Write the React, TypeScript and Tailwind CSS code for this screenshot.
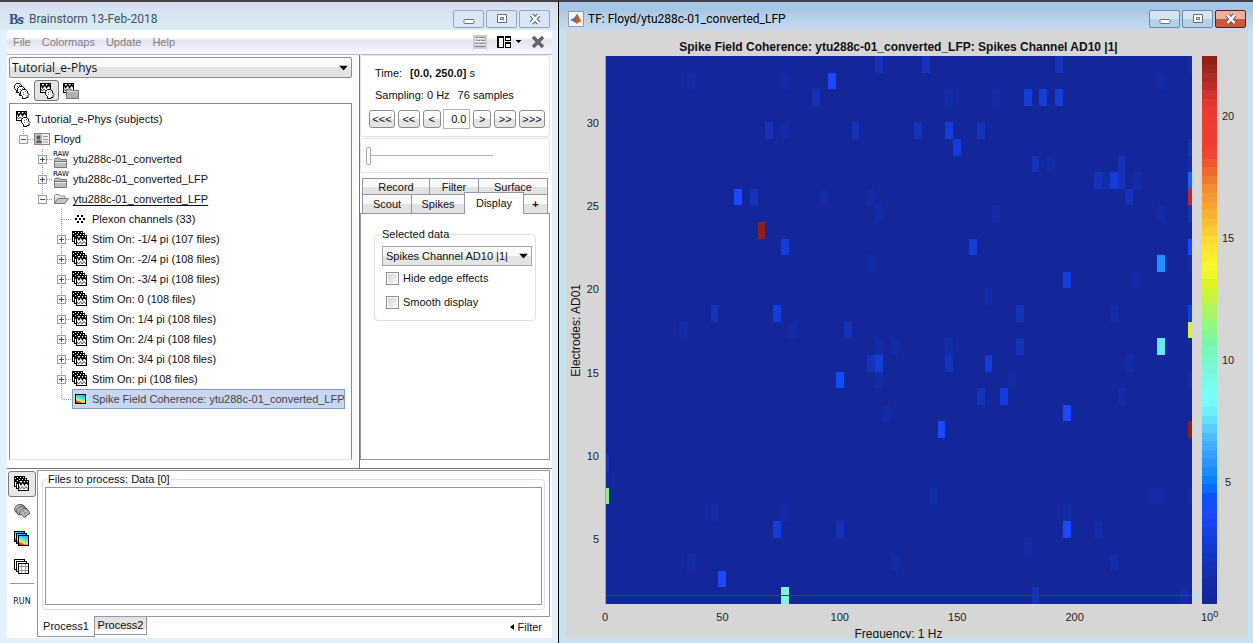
import { useState } from 'react'
import type { ReactNode } from 'react'
import { clsx } from 'clsx'

type Level = 'dim' | 'mid' | 'high' | 'bright'
type Cell = [row: number, col: number, color: string]

const LEVELS: Record<Level, string> = {
  dim: '#142ca8',
  mid: '#1433b8',
  high: '#143cd8',
  bright: '#1c48ff',
}

const ROWS = 33
const COLS = 75

const CELLS: Cell[] = [
  [0, 35, 'mid'], [0, 41, 'mid'], [0, 58, 'mid'], [0, 75, 'dim'],
  [1, 11, 'dim'], [1, 23, 'dim'], [1, 29, 'bright'], [1, 71, 'dim'],
  [2, 27, 'mid'], [2, 44, 'dim'], [2, 50, 'dim'], [2, 54, 'high'], [2, 56, 'high'], [2, 58, 'high'],
  [4, 21, 'mid'], [4, 23, 'dim'], [4, 32, 'mid'], [4, 40, 'mid'], [4, 44, 'high'], [4, 48, 'mid'],
  [5, 45, 'high'], [5, 75, 'mid'],
  [6, 55, 'mid'], [6, 57, 'dim'], [6, 66, 'mid'], [6, 75, 'dim'],
  [7, 63, 'mid'], [7, 64, 'dim'], [7, 65, 'high'], [7, 66, 'mid'], [7, 68, 'dim'], [7, 75, '#1464ff'],
  [8, 17, 'bright'], [8, 19, 'mid'], [8, 28, 'dim'], [8, 34, 'dim'], [8, 67, 'mid'], [8, 75, '#b82c28'],
  [9, 35, 'dim'], [9, 50, 'dim'], [9, 71, 'dim'], [9, 75, 'mid'],
  [10, 20, '#8c201c'],
  [11, 23, 'high'], [11, 47, 'high'], [11, 75, 'bright'],
  [12, 34, 'dim'], [12, 71, '#2090ff'], [12, 75, 'dim'],
  [13, 59, 'high'], [13, 68, 'dim'],
  [14, 49, 'dim'],
  [15, 14, 'mid'], [15, 22, 'high'], [15, 53, 'mid'], [15, 65, 'dim'], [15, 75, 'high'],
  [16, 10, 'dim'], [16, 24, 'dim'], [16, 31, 'mid'], [16, 75, '#d4f428'],
  [17, 35, 'dim'], [17, 37, 'dim'], [17, 44, 'dim'], [17, 53, 'mid'], [17, 71, '#68e8ff'],
  [18, 34, 'mid'], [18, 35, 'high'], [18, 44, 'mid'], [18, 49, 'high'], [18, 67, 'dim'],
  [19, 30, '#0c50ff'], [19, 35, 'dim'], [19, 52, 'dim'], [19, 75, 'dim'],
  [20, 48, 'mid'], [20, 51, 'high'], [20, 66, 'dim'],
  [21, 36, 'dim'], [21, 59, 'bright'],
  [22, 43, 'bright'], [22, 75, '#8c201c'],
  [24, 0, 'mid'],
  [25, 0, 'dim'],
  [26, 0, '#82f68c'], [26, 42, 'dim'], [26, 70, 'dim'], [26, 71, 'dim'], [26, 75, 'dim'],
  [27, 14, 'dim'], [27, 23, 'dim'], [27, 59, 'dim'],
  [28, 22, 'high'], [28, 30, 'mid'], [28, 59, 'bright'], [28, 63, 'dim'],
  [29, 54, 'dim'],
  [30, 11, 'dim'], [30, 37, 'dim'], [30, 65, 'dim'],
  [31, 15, 'bright'],
  [32, 23, '#78f8d8'], [32, 55, 'mid'], [32, 74, 'dim'],
]

const COLOR_STOPS: [number, string][] = [
  [0, '#14279a'], [0.05, '#142eb0'], [0.11, '#143cd8'], [0.16, '#1c48ff'], [0.19, '#0c50ff'],
  [0.22, '#0a80ff'], [0.27, '#38a0ff'], [0.31, '#50c4ff'], [0.34, '#68e8ff'], [0.37, '#78ffff'],
  [0.43, '#78f8d8'], [0.48, '#78f4a8'], [0.51, '#96f680'], [0.555, '#c0f448'], [0.585, '#dcf420'],
  [0.615, '#fcf830'], [0.66, '#ffe030'], [0.706, '#f8b830'], [0.76, '#f09030'], [0.8, '#f06030'],
  [0.83, '#f04030'], [0.9, '#ec3c30'], [0.925, '#dc3830'], [0.956, '#b82c28'], [1, '#902018'],
]

const STEPS = 64

function channel(hex: string, i: number) {
  return parseInt(hex.slice(1 + i * 2, 3 + i * 2), 16)
}

function colorAt(t: number) {
  const hi = Math.max(1, COLOR_STOPS.findIndex(([p]) => p >= t))
  const [p0, c0] = COLOR_STOPS[hi - 1]
  const [p1, c1] = COLOR_STOPS[hi]
  const f = (t - p0) / (p1 - p0)
  const rgb = [0, 1, 2].map((i) => Math.round(channel(c0, i) + (channel(c1, i) - channel(c0, i)) * f))
  return `rgb(${rgb.join(',')})`
}

/* ---------- icons ---------- */

function Icon({ children, size = 16 }: { children: ReactNode; size?: number }) {
  return (
    <svg width={size} height={size} viewBox="0 0 16 16" className="shrink-0" fill="none" aria-hidden>
      {children}
    </svg>
  )
}

function WaveStackIcon() {
  return (
    <Icon>
      <g shapeRendering="crispEdges" stroke="#000" fill="#fff">
        <rect x="0.5" y="0.5" width="10" height="10" />
        <path d="M1 1.500h2M4 1.500h2M7 1.500h2M1.500 3v3" />
        <rect x="2.5" y="2.5" width="10" height="10" />
        <path d="M3 3.500h2M6 3.500h2M9 3.500h2M3.500 5v3" />
        <rect x="4.5" y="4.5" width="10" height="10" />
      </g>
      <path d="M5 5.500l2 3 2-3 1.500 3 1.500-3 2 3" stroke="#000" strokeWidth="1.500" />
      <path d="M5 10.500l1.500 2.500 2-2.500 1.500 2.500 2-2.500 2 2.500" stroke="#555" />
    </Icon>
  )
}

function Head({ x, y }: { x: number; y: number }) {
  return (
    <g transform={`translate(${x} ${y})`}>
      <path
        d="M2.500 .5h3l2 1.500v2l1.500 1.500-1 1v2h-2v1h-3.500V7.500L.5 5.500v-3z"
        fill="#fff"
        stroke="#000"
      />
      <path d="M3 3.500h1M5 2.500h1M3 5.500h1" stroke="#666" shapeRendering="crispEdges" />
    </g>
  )
}

function HeadsIcon() {
  return (
    <Icon>
      <Head x={0} y={0} />
      <Head x={3} y={3} />
      <Head x={6} y={6} />
    </Icon>
  )
}

function WaveHeadIcon() {
  return (
    <Icon>
      <rect x="1.5" y="0.5" width="10" height="9" fill="#fff" stroke="#000" shapeRendering="crispEdges" />
      <path d="M2 1l1.500 3.500L6 1.500l1.500 3L9.500 1.500l1.500 2.500" stroke="#000" strokeWidth="1.500" />
      <path d="M2 6l1.500 2L5 6l2 2" stroke="#444" />
      <Head x={6} y={6} />
    </Icon>
  )
}

function WaveFolderIcon() {
  return (
    <Icon>
      <rect x="0.5" y="0.5" width="10" height="9" fill="#fff" stroke="#000" shapeRendering="crispEdges" />
      <path d="M1 1l1.500 3.500L5 1.500l1.500 3L8.500 1.500l1.500 2.500" stroke="#000" strokeWidth="1.500" />
      <path d="M1 6l1.500 2L4 6" stroke="#444" />
      <path d="M3.500 15.500V7l1-1h3.500l1 1.500h6.500v8z" fill="#b0b0b0" stroke="#777" />
      <path d="M4 8.500h11" stroke="#d8d8d8" />
    </Icon>
  )
}

function RawFolderIcon() {
  return (
    <span className="flex w-4 shrink-0 flex-col items-center">
      <span className="font-['DejaVu_Sans'] text-[7px] leading-[6px] text-black">RAW</span>
      <svg width="14" height="11" viewBox="0 0 14 11" aria-hidden>
        <path d="M.5 10.500V2.500l1-1.500h4l1 1.500h6v8z" fill="#bdbdbd" stroke="#777" />
        <path d="M1 4.500h11" stroke="#777" />
        <path d="M1 5.500h11" stroke="#ececec" />
      </svg>
    </span>
  )
}

function OpenFolderIcon() {
  return (
    <Icon>
      <path d="M1.500 12.500v-8l1-1h3.500l1 1.500h5v2.500" fill="#e8e8e8" stroke="#888" />
      <path d="M1.500 12.500l3-5h11l-3.500 5z" fill="#c4c4c4" stroke="#777" />
    </Icon>
  )
}

function SubjectIcon() {
  return (
    <Icon>
      <rect x="0.5" y="2.5" width="15" height="11" fill="#eee" stroke="#888" />
      <path d="M1 13V3h7v10z" fill="#bbb" />
      <circle cx="4.500" cy="6.500" r="2" fill="#555" />
      <path d="M2 12c0-4 6-4 6 0z" fill="#666" />
      <path d="M9 5.500h5M9 8.500h5M9 11h5" stroke="#999" />
    </Icon>
  )
}

function ChannelsIcon() {
  return (
    <Icon>
      <path
        d="M5 4h2v2H5zM9 4h2v2H9zM3 7h2v2H3zM7 7h2v2H7zM11 7h2v2h-2zM5 10h2v2H5zM9 10h2v2H9z"
        fill="#000"
        shapeRendering="crispEdges"
      />
    </Icon>
  )
}

function JetGradient({ id }: { id: string }) {
  return (
    <linearGradient id={id} x1="0.7" y1="0" x2="0.3" y2="1">
      <stop offset="0" stopColor="#38a0ff" />
      <stop offset="0.4" stopColor="#40e8e8" />
      <stop offset="0.7" stopColor="#f4f040" />
      <stop offset="0.9" stopColor="#f02010" />
    </linearGradient>
  )
}

function TimefreqIcon() {
  return (
    <Icon>
      <JetGradient id="jet-one" />
      <rect x="3.500" y="3.500" width="10" height="9" fill="url(#jet-one)" stroke="#000" shapeRendering="crispEdges" />
    </Icon>
  )
}

function TimefreqStackIcon() {
  return (
    <Icon>
      <JetGradient id="jet-stack" />
      <g fill="url(#jet-stack)" stroke="#000" shapeRendering="crispEdges">
        <rect x="0.5" y="0.5" width="10" height="10" />
        <rect x="2.5" y="2.5" width="10" height="10" />
        <rect x="4.5" y="4.5" width="10" height="10" />
      </g>
    </Icon>
  )
}

function MatrixStackIcon() {
  return (
    <Icon>
      <g fill="#fff" stroke="#000" shapeRendering="crispEdges">
        <rect x="0.5" y="0.5" width="10" height="10" />
        <rect x="2.5" y="2.5" width="10" height="10" />
        <rect x="4.5" y="4.5" width="10" height="10" />
      </g>
      <path d="M7.500 5v9M11.500 5v9M5 7.500h9M5 11.500h9" stroke="#999" shapeRendering="crispEdges" />
    </Icon>
  )
}

function SourcesIcon() {
  return (
    <Icon>
      <g fill="#b8b8b8" stroke="#555">
        <path d="M.5 7C.5 3 4 1 7 1.500s4 2 4.500 4l-4 3-5 1.500z" />
        <path d="M2.500 9C2.500 5 6 3 9 3.500s4 2 4.500 4l-4 3-5 1.500z" />
        <path d="M5.500 11C5 7.500 8 5 11 5.500s4.500 3 4.500 5.500c-1 1-2 .5-3 1l-1 2c-2 .5-3-1-3.500-2z" />
      </g>
      <path d="M8 9l2-1.500m0 3.500l2-2m-7-4l2-1" stroke="#777" />
    </Icon>
  )
}

function CaretDown() {
  return (
    <svg
      width="9"
      height="5"
      viewBox="0 0 9 5"
      className="pointer-events-none absolute right-1 top-1/2 -translate-y-1/2"
      aria-hidden
    >
      <path d="M0 0h9L4.500 5z" fill="#000" />
    </svg>
  )
}

/* ---------- window chrome ---------- */

function CaptionButtons({ active }: { active?: boolean }) {
  const shape = 'flex h-[18px] w-[31px] items-center justify-center rounded-[2px] border'
  const plain = active
    ? 'border-[#6f87a8] bg-linear-to-b from-[#d4e6f4] from-50% to-[#b4d4e4] to-50%'
    : 'border-[#95a5c0] bg-[#d9e6f3]'
  const danger = active ? 'border-[#5c1c2c] bg-linear-to-b from-[#eeb09c] from-50% to-[#cc5838] to-50%' : plain
  return (
    <div className="flex gap-[2px]">
      <button type="button" className={clsx(shape, plain)} aria-label="Minimize">
        <svg width="12" height="12" viewBox="0 0 12 12" aria-hidden>
          <rect x="1" y="6.500" width="10" height="4" rx="1" fill="#fff" stroke="#6b7080" />
        </svg>
      </button>
      <button type="button" className={clsx(shape, plain)} aria-label="Maximize">
        <svg width="12" height="12" viewBox="0 0 12 12" aria-hidden>
          <path d="M1.500 1.500h9v8h-9zM4.500 4.500h3v2h-3z" fill="#fff" fillRule="evenodd" stroke="#6b7080" />
        </svg>
      </button>
      <button type="button" className={clsx(shape, danger)} aria-label="Close">
        <svg width="12" height="12" viewBox="0 0 12 12" aria-hidden>
          <path d="M2.500 2l7 8m0-8l-7 8" stroke="#5c6070" strokeWidth="4.500" />
          <path d="M2.500 2l7 8m0-8l-7 8" stroke="#fff" strokeWidth="2.500" />
        </svg>
      </button>
    </div>
  )
}

/* ---------- database tree ---------- */

type TreeNode = {
  label: string
  depth: number
  icon: ReactNode
  toggle?: '+' | '-'
  last?: boolean
  underline?: boolean
  selected?: boolean
}

const STIMS = [
  '-1/4 pi (107 files)',
  '-2/4 pi (108 files)',
  '-3/4 pi (108 files)',
  '0 (108 files)',
  '1/4 pi (108 files)',
  '2/4 pi (108 files)',
  '3/4 pi (108 files)',
  'pi (108 files)',
]

const TREE: TreeNode[] = [
  { label: 'Tutorial_e-Phys (subjects)', depth: 0, icon: <WaveHeadIcon /> },
  { label: 'Floyd', depth: 1, icon: <SubjectIcon />, toggle: '-', last: true },
  { label: 'ytu288c-01_converted', depth: 2, icon: <RawFolderIcon />, toggle: '+' },
  { label: 'ytu288c-01_converted_LFP', depth: 2, icon: <RawFolderIcon />, toggle: '+' },
  { label: 'ytu288c-01_converted_LFP', depth: 2, icon: <OpenFolderIcon />, toggle: '-', last: true, underline: true },
  { label: 'Plexon channels (33)', depth: 3, icon: <ChannelsIcon /> },
  ...STIMS.map((s): TreeNode => ({ label: `Stim On: ${s}`, depth: 3, icon: <WaveStackIcon />, toggle: '+' })),
  { label: 'Spike Field Coherence: ytu288c-01_converted_LFP', depth: 3, icon: <TimefreqIcon />, last: true, selected: true },
]

function Guide({ toggle, last }: { toggle?: '+' | '-'; last?: boolean }) {
  return (
    <svg width="19" height="20" viewBox="0 0 19 20" className="shrink-0" shapeRendering="crispEdges" aria-hidden>
      <path d={last ? 'M8.500 0v10' : 'M8.500 0v20'} stroke="#999" strokeDasharray="1 1" />
      <path d="M9 10.500h10" stroke="#999" strokeDasharray="1 1" />
      {toggle && (
        <>
          <rect x="4.500" y="6.500" width="8" height="8" fill="#f4f6fa" stroke="#a0a0a0" />
          <path d={toggle === '+' ? 'M6 10.500h5M8.500 8v5' : 'M6 10.500h5'} stroke="#38588c" />
        </>
      )}
    </svg>
  )
}

function TreeRow({ node }: { node: TreeNode }) {
  return (
    <li className="flex h-5 items-center" role="treeitem" aria-level={node.depth + 1} aria-selected={!!node.selected}>
      {Array.from({ length: Math.max(0, node.depth - 1) }, (_, i) => (
        <span key={i} className="w-[19px] shrink-0" />
      ))}
      {node.depth > 0 && <Guide toggle={node.toggle} last={node.last} />}
      <span
        className={clsx(
          'flex h-5 shrink-0 items-center gap-1 whitespace-nowrap',
          node.selected && 'bg-[#c8d6f0] text-[#444] outline outline-1 -outline-offset-1 outline-[#7a9cc8]',
        )}
      >
        {node.icon}
        <span className={node.underline ? 'underline underline-offset-2' : undefined}>{node.label}</span>
      </span>
    </li>
  )
}

/* ---------- side panel ---------- */

const BUTTON =
  'h-[18px] rounded-[3px] border border-[#8c8c8c] bg-linear-to-b from-white from-50% to-[#e4e4e4] to-50% text-center leading-none'

function TimePanel() {
  return (
    <section className="h-[82px] rounded-[3px] border border-[#e0e0ee] pl-2 pr-1 pt-[6px]">
      <p className="flex h-[22px] items-center gap-2 pl-[6px]">
        <span>Time:</span>
        <span>
          <b>[0.0, 250.0]</b> s
        </span>
      </p>
      <p className="flex h-[22px] items-center gap-2 pl-[6px]">
        <span>Sampling: 0 Hz</span>
        <span>76 samples</span>
      </p>
      <div className="mt-[3px] flex items-center justify-between">
        <button type="button" className={clsx(BUTTON, 'w-[26px]')}>&lt;&lt;&lt;</button>
        <button type="button" className={clsx(BUTTON, 'w-[22px]')}>&lt;&lt;</button>
        <button type="button" className={clsx(BUTTON, 'w-[18px]')}>&lt;</button>
        <input
          aria-label="Current time"
          defaultValue="0.0"
          className="h-5 w-[27px] border border-[#b0b0cc] bg-white pr-[3px] text-right"
        />
        <button type="button" className={clsx(BUTTON, 'w-[18px]')}>&gt;</button>
        <button type="button" className={clsx(BUTTON, 'w-[22px]')}>&gt;&gt;</button>
        <button type="button" className={clsx(BUTTON, 'w-[26px]')}>&gt;&gt;&gt;</button>
      </div>
    </section>
  )
}

const TAB =
  'flex items-center justify-center border border-[#9696aa] bg-linear-to-b from-[#fafafa] from-50% to-[#e2e2e2] to-50%'

const CHECKBOX =
  'h-[13px] w-[13px] appearance-none border border-[#8c9096] bg-linear-to-br from-[#ccd2da] to-[#fafafa] outline outline-1 -outline-offset-2 outline-white checked:bg-[#38588c]'

function DisplayPanel() {
  const [hideEdges, setHideEdges] = useState(false)
  const [smooth, setSmooth] = useState(false)

  return (
    <div className="flex-1 border border-t-0 border-[#9696aa] px-[13px] pt-3">
      <fieldset className="h-[95px] rounded-[4px] border border-[#dedeee] px-[7px]">
        <legend className="-ml-px px-px leading-4">Selected data</legend>
        <div className="relative mt-1 -mr-1">
          <select
            aria-label="Selected data"
            className="h-5 w-full appearance-none border border-[#a4a4b8] bg-linear-to-b from-[#fafafa] from-50% to-[#e4e4e4] to-50% pl-[3px]"
          >
            <option>Spikes Channel AD10 |1|</option>
          </select>
          <CaretDown />
        </div>
        <label className="mt-[3px] flex h-[18px] items-center gap-1 pl-1">
          <input type="checkbox" className={CHECKBOX} checked={hideEdges} onChange={(e) => setHideEdges(e.target.checked)} />
          Hide edge effects
        </label>
        <label className="mt-[6px] flex h-[18px] items-center gap-1 pl-1">
          <input type="checkbox" className={CHECKBOX} checked={smooth} onChange={(e) => setSmooth(e.target.checked)} />
          Smooth display
        </label>
      </fieldset>
    </div>
  )
}

function SidePanel() {
  return (
    <aside className="flex w-[193px] shrink-0 flex-col border-l border-[#74747c] pb-2 pr-[2px]">
      <TimePanel />
      <div className="mt-px flex h-[35px] items-center rounded-[3px] border border-[#e0e0ee] pl-[5px]">
        <input
          type="range"
          aria-label="Time"
          defaultValue={0}
          className="h-[18px] w-[127px] appearance-none bg-transparent [&::-webkit-slider-runnable-track]:h-px [&::-webkit-slider-runnable-track]:bg-[#b4b4b4] [&::-webkit-slider-thumb]:-mt-[8px] [&::-webkit-slider-thumb]:h-[18px] [&::-webkit-slider-thumb]:w-[5px] [&::-webkit-slider-thumb]:appearance-none [&::-webkit-slider-thumb]:rounded-[2px] [&::-webkit-slider-thumb]:border [&::-webkit-slider-thumb]:border-[#9caab0] [&::-webkit-slider-thumb]:bg-white"
        />
      </div>
      <div role="tablist" className="mt-[5px] pl-[2px] pr-[2px]">
        <div className="flex h-[17px]">
          <button type="button" role="tab" className={clsx(TAB, 'w-[68px]')}>Record</button>
          <button type="button" role="tab" className={clsx(TAB, '-ml-px w-[50px]')}>Filter</button>
          <button type="button" role="tab" className={clsx(TAB, '-ml-px flex-1')}>Surface</button>
        </div>
        <div className="-mx-[2px] flex h-[19px] items-stretch border-b border-[#9696aa] px-[2px]">
          <button type="button" role="tab" className={clsx(TAB, 'w-[50px] border-y-0')}>Scout</button>
          <button type="button" role="tab" className={clsx(TAB, '-ml-px w-[54px] border-y-0')}>Spikes</button>
          <button
            type="button"
            role="tab"
            aria-selected
            className="z-10 -mb-px -ml-px -mt-[3px] flex w-[60px] items-center justify-center border-x border-t border-[#9696aa] bg-white pb-[2px]"
          >
            Display
          </button>
          <button type="button" role="tab" className={clsx(TAB, '-ml-px flex-1 border-y-0 font-bold')}>+</button>
        </div>
      </div>
      <DisplayPanel />
    </aside>
  )
}

/* ---------- windows ---------- */

function ExplorerPanel() {
  return (
    <div className="flex min-w-0 flex-1 flex-col px-[2px] pb-2 pr-[7px] pt-[2px]">
      <div className="relative">
        <select
          aria-label="Protocol"
          className="h-[21px] w-full appearance-none rounded-[2px] border border-[#8c8c8c] bg-linear-to-b from-[#fafafa] from-50% to-[#e2e2e2] to-50% pl-[2px] font-['Open_Sans',sans-serif] text-[12px]"
        >
          <option>Tutorial_e-Phys</option>
        </select>
        <CaretDown />
      </div>
      <div className="flex h-[25px] items-center gap-1 pl-[5px]">
        <button type="button" aria-label="Anatomy view"><HeadsIcon /></button>
        <button
          type="button"
          aria-label="Functional data, by subject"
          aria-pressed
          className="flex h-[21px] w-[25px] items-center justify-center rounded-[3px] border border-[#777] bg-[#e4e4e4]"
        >
          <WaveHeadIcon />
        </button>
        <button type="button" aria-label="Functional data, by condition"><WaveFolderIcon /></button>
      </div>
      <ul role="tree" aria-label="Database" className="flex-1 border border-[#8c8c8c] border-b-[#dedeee] pl-[5px] pt-[5px]">
        {TREE.map((node, i) => (
          <TreeRow key={i} node={node} />
        ))}
      </ul>
    </div>
  )
}

function ProcessPanel() {
  return (
    <div className="flex h-[170px] shrink-0 border-t border-[#74747c] pb-px">
      <div className="flex w-[30px] flex-col items-center pt-[2px]">
        <button
          type="button"
          aria-label="Process recordings"
          aria-pressed
          className="flex h-[26px] w-7 items-center justify-center rounded-[3px] border border-[#777] bg-[#e8e8e8]"
        >
          <WaveStackIcon />
        </button>
        <button type="button" aria-label="Process sources" className="flex h-7 items-center"><SourcesIcon /></button>
        <button type="button" aria-label="Process time-frequency" className="flex h-7 items-center"><TimefreqStackIcon /></button>
        <button type="button" aria-label="Process matrix" className="flex h-7 items-center"><MatrixStackIcon /></button>
        <hr className="mt-[2px] w-6 border-[#999]" />
        <button type="button" className="mt-3 font-['DejaVu_Sans'] text-[8px] leading-3">RUN</button>
      </div>
      <div className="flex min-w-0 flex-1 flex-col pr-[2px] pt-px">
        <div className="flex flex-1 flex-col border border-b-0 border-[#9696aa] px-1 pb-[6px]">
          <fieldset className="flex flex-1 flex-col rounded-[4px] border border-[#dedeee] px-[2px] pb-[3px]">
            <legend className="ml-[2px] px-px leading-4">Files to process: Data [0]</legend>
            <div className="h-[118px] border border-[#9696aa] bg-white" />
          </fieldset>
        </div>
        <div className="flex h-[21px]">
          <button type="button" role="tab" aria-selected className="w-[58px] border-x border-b border-[#9696aa]">
            Process1
          </button>
          <div className="flex flex-1 items-start border-t border-[#9696aa]">
            <button
              type="button"
              role="tab"
              className="h-[18px] w-[52px] border-b border-r border-[#9696aa] bg-linear-to-b from-[#e2e2e2] from-70% to-white to-70% leading-none"
            >
              Process2
            </button>
            <button type="button" className="ml-auto mr-2 flex items-center gap-1 pt-[2px]">
              <svg width="4" height="6" viewBox="0 0 4 6" aria-hidden>
                <path d="M4 0v6L0 3z" fill="#000" />
              </svg>
              Filter
            </button>
          </div>
        </div>
      </div>
    </div>
  )
}

function MenuBar() {
  return (
    <div className="flex h-[25px] shrink-0 items-center border-b border-[#b8b8cc] bg-linear-to-b from-white from-30% via-[#e3e3f1] via-45% to-[#f8f8fe]">
      <nav className="flex gap-[11px] pl-[6px] text-[#808080]">
        <button type="button">File</button>
        <button type="button">Colormaps</button>
        <button type="button">Update</button>
        <button type="button">Help</button>
      </nav>
      <div className="ml-auto flex items-center gap-[10px] pr-[7px]">
        <button type="button" aria-label="Reload">
          <svg width="14" height="14" viewBox="0 0 14 14" aria-hidden>
            <path d="M0 0h14v14H0z" fill="#ccc" />
            <path d="M2 2.500h3M6 2.500h6M4 5.500h3M8 5.500h4M2 8.500h3M6 8.500h6M2 11.500h10" stroke="#888" />
            <path d="M2 3.500h10M2 6.500h10M2 9.500h10" stroke="#eee" />
          </svg>
        </button>
        <button type="button" aria-label="Window layout">
          <svg width="24" height="14" viewBox="0 0 24 14" shapeRendering="crispEdges" aria-hidden>
            <path d="M.5 1.500h6v11h-6zM8.500 1.500h5v4h-5zM8.500 7.500h5v5h-5z" fill="#fff" stroke="#000" />
            <path d="M0 2.500h7M8 2.500h6M8 8.500h6M1.500 1v12" stroke="#000" />
            <path d="M19 5h5v1h-1v1h-1v1h-1V7h-1V6h-1z" fill="#000" />
          </svg>
        </button>
        <button type="button" aria-label="Close all">
          <svg width="14" height="14" viewBox="0 0 14 14" aria-hidden>
            <path d="M2 2l10 10M12 2L2 12" stroke="#666" strokeWidth="3.500" />
          </svg>
        </button>
      </div>
    </div>
  )
}

function BrainstormWindow() {
  return (
    <div className="flex min-w-0 flex-[558] flex-col border-r border-t-2 border-r-black border-t-[#444048] bg-[#e3f0fd]">
      <header className="flex h-7 shrink-0 items-center bg-linear-to-b from-[#d4d4ea] via-[#d6e4f2] via-25% to-[#d8ecf2] pl-[9px] pr-2 pt-[5px]">
        <svg width="16" height="16" viewBox="0 0 16 16" aria-hidden>
          <text x="0" y="13" fill="#34507c" className="font-['Liberation_Serif'] text-[14px] font-bold">B</text>
          <text x="8" y="13" fill="#34507c" className="font-['Liberation_Sans'] text-[13px] font-bold italic">s</text>
        </svg>
        <h1 className="flex-1 pl-1 font-[Roboto,sans-serif] text-[12px] text-[#40506c]">Brainstorm 13-Feb-2018</h1>
        <CaptionButtons />
      </header>
      <div className="mb-[5px] ml-[7px] mr-[6px] flex flex-1 flex-col bg-white">
        <MenuBar />
        <div className="flex flex-1">
          <ExplorerPanel />
          <SidePanel />
        </div>
        <ProcessPanel />
      </div>
    </div>
  )
}

function Heatmap() {
  const pct = (v: number) => `${v}%`
  return (
    <svg className="h-full min-w-0 flex-1 overflow-visible" role="img" aria-label="Spike field coherence map">
      <g shapeRendering="crispEdges">
        <rect width="100%" height="100%" fill="#14279a" />
        {CELLS.map(([row, col, color]) => {
          const from = Math.max(0, col - 0.5)
          const to = Math.min(COLS, col + 0.5)
          return (
            <rect
              key={`${row}-${col}`}
              x={pct((from / COLS) * 100)}
              y={pct((row / ROWS) * 100)}
              width={pct(((to - from) / COLS) * 100)}
              height={pct(100 / ROWS)}
              fill={LEVELS[color as Level] ?? color}
            />
          )
        })}
        <line x1="0" x2="100%" y1="98.500%" y2="98.500%" stroke="#78205c" />
        <line x1="0" x2="0" y1="0" y2="100%" stroke="#f08078" />
      </g>
      {[30, 25, 20, 15, 10, 5].map((v) => (
        <text key={v} x="-6" y={pct(((ROWS + 1 - v) / ROWS) * 100)} dy="5" textAnchor="end" fill="#222">
          {v}
        </text>
      ))}
      {[0, 50, 100, 150, 200].map((v) => (
        <text key={v} x={pct(v / 2.5)} y="100%" dy="17" textAnchor="middle" fill="#222">
          {v}
        </text>
      ))}
    </svg>
  )
}

function Colorbar() {
  return (
    <svg className="ml-[10px] h-full w-[15px] shrink-0 overflow-visible" role="img" aria-label="Color scale">
      <g shapeRendering="crispEdges">
        {Array.from({ length: STEPS }, (_, i) => (
          <rect
            key={i}
            width="100%"
            y={`${(i / STEPS) * 100}%`}
            height={`${(1 / STEPS) * 100}%`}
            fill={colorAt(1 - i / (STEPS - 1))}
          />
        ))}
      </g>
      {[20, 15, 10, 5].map((v) => (
        <text key={v} x="26" y={`${100 - v * 4.45}%`} dy="4" textAnchor="middle" fill="#222">
          {v}
        </text>
      ))}
      <text x="-1" y="100%" dy="17" fill="#222">
        10<tspan dy="-4" className="text-[9px]">0</tspan>
      </text>
    </svg>
  )
}

function FigureWindow() {
  return (
    <div className="flex min-w-0 flex-[694] flex-col border-t-2 border-[#444048] bg-[#c4e3f0]">
      <header className="flex h-7 shrink-0 items-center bg-linear-to-b from-[#a6c6e6] from-30% via-[#b4d0e4] via-50% to-[#c8d8f2] pl-[9px] pr-[7px] pt-[5px]">
        <svg width="16" height="16" viewBox="0 0 16 16" aria-hidden>
          <rect x="0.5" y="0.5" width="15" height="15" fill="#f4f4f4" stroke="#999" />
          <path d="M2 9l4-2 3-4 1 4-3 5-2-2z" fill="#3878b8" />
          <path d="M9 3c1 0 2 4 5 8-2-1-3 0-5 2L7 11c1-2 1-5 2-8z" fill="#d85820" />
        </svg>
        <h1 className="flex-1 pl-1 font-[Roboto,sans-serif] text-[12px] text-black">TF: Floyd/ytu288c-01_converted_LFP</h1>
        <CaptionButtons active />
      </header>
      <main className="mb-[5px] ml-[7px] mr-[5px] flex flex-1 flex-col overflow-hidden bg-[#d6d6d6]">
        <h2 className="flex h-[26px] shrink-0 items-center justify-center pl-[39px] pr-[56px] pt-2 text-center text-[12px] font-bold leading-4">
          Spike Field Coherence: ytu288c-01_converted_LFP: Spikes Channel AD10 |1|
        </h2>
        <div className="flex min-h-[300px] flex-1 pr-[31px]">
          <div className="flex w-[39px] shrink-0 items-center pl-[2px]">
            <span className="rotate-180 text-[12px] leading-4 [writing-mode:vertical-rl]">Electrodes: AD01</span>
          </div>
          <Heatmap />
          <Colorbar />
        </div>
        <p className="mt-[22px] h-3 shrink-0 pl-[39px] pr-[56px] text-center text-[12px] leading-4">Frequency: 1 Hz</p>
      </main>
    </div>
  )
}

export default function App() {
  return (
    <div className="flex min-h-screen font-['Liberation_Sans',Arial,sans-serif] text-[11px] leading-4 text-[#111]">
      <BrainstormWindow />
      <FigureWindow />
    </div>
  )
}
